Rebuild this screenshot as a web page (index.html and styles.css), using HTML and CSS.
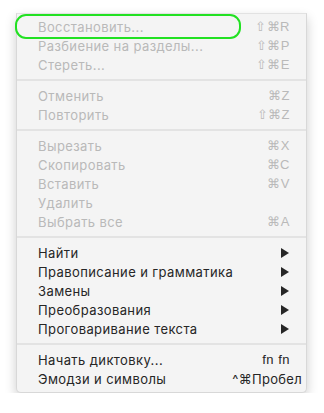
FILE: index.html
```html
<!DOCTYPE html>
<html lang="ru">
<head>
    <meta charset="UTF-8">
    <meta name="viewport" content="width=device-width, initial-scale=1.0">
    <title>Context Menu</title>
    <link rel="stylesheet" href="styles.css">
</head>
<body>
    <div class="menu">
        <div class="highlight"></div>
        <div class="group">
            <div class="item disabled"><span>Восстановить...</span><span class="key">⇧⌘R</span></div>
            <div class="item disabled"><span>Разбиение на разделы...</span><span class="key">⇧⌘P</span></div>
            <div class="item disabled"><span>Стереть...</span><span class="key">⇧⌘E</span></div>
        </div>
        <div class="separator"></div>
        <div class="group">
            <div class="item disabled"><span>Отменить</span><span class="key">⌘Z</span></div>
            <div class="item disabled"><span>Повторить</span><span class="key">⇧⌘Z</span></div>
        </div>
        <div class="separator"></div>
        <div class="group">
            <div class="item disabled"><span>Вырезать</span><span class="key">⌘X</span></div>
            <div class="item disabled"><span>Скопировать</span><span class="key">⌘C</span></div>
            <div class="item disabled"><span>Вставить</span><span class="key">⌘V</span></div>
            <div class="item disabled"><span>Удалить</span></div>
            <div class="item disabled"><span>Выбрать все</span><span class="key">⌘A</span></div>
        </div>
        <div class="separator"></div>
        <div class="group">
            <div class="item"><span>Найти</span><span class="arrow"></span></div>
            <div class="item"><span>Правописание и грамматика</span><span class="arrow"></span></div>
            <div class="item"><span>Замены</span><span class="arrow"></span></div>
            <div class="item"><span>Преобразования</span><span class="arrow"></span></div>
            <div class="item"><span>Проговаривание текста</span><span class="arrow"></span></div>
        </div>
        <div class="separator"></div>
        <div class="group">
            <div class="item"><span>Начать диктовку...</span><span class="key">fn fn</span></div>
            <div class="item"><span>Эмодзи и символы</span><span class="key wide">^⌘Пробел</span></div>
        </div>
    </div>
</body>
</html>
```

FILE: styles.css
```css
* {
    margin: 0;
    padding: 0;
    box-sizing: border-box;
}
body {
    background: #ffffff;
    font-family: Inter, "Liberation Sans", Arial, sans-serif;
    font-size: 13px;
    letter-spacing: 0.4px;
    color: #262626;
    padding: 13px 17px 0 16px;
}
.menu {
    position: relative;
    width: 291px;
    background: #f4f4f4;
    border: 1px solid #d8d8d8;
    border-top-color: #e2e2e2;
    border-radius: 0 0 5px 5px;
    padding: 3px 0 4px;
    box-shadow: 0 5px 12px rgba(0, 0, 0, 0.2);
}
.item {
    display: flex;
    align-items: center;
    justify-content: space-between;
    height: 19px;
    padding: 0 16px 0 21px;
}
.item.disabled {
    color: #b9b9b9;
}
.key {
    font-family: "Liberation Sans", Arial, sans-serif;
    font-size: 13px;
    letter-spacing: 0.5px;
}
.key.wide {
    font-family: Inter, "Liberation Sans", Arial, sans-serif;
    margin-right: -12px;
    letter-spacing: 0.3px;
}
.arrow {
    width: 0;
    height: 0;
    border-top: 5px solid transparent;
    border-bottom: 5px solid transparent;
    border-left: 8px solid #262626;
    margin-right: 1px;
}
.separator {
    height: 2px;
    background: #e3e3e3;
    margin: 5px 0;
}
.highlight {
    position: absolute;
    left: -2px;
    top: 0;
    width: 226px;
    height: 25px;
    border: 2px solid #22e122;
    border-radius: 11px;
}
```
